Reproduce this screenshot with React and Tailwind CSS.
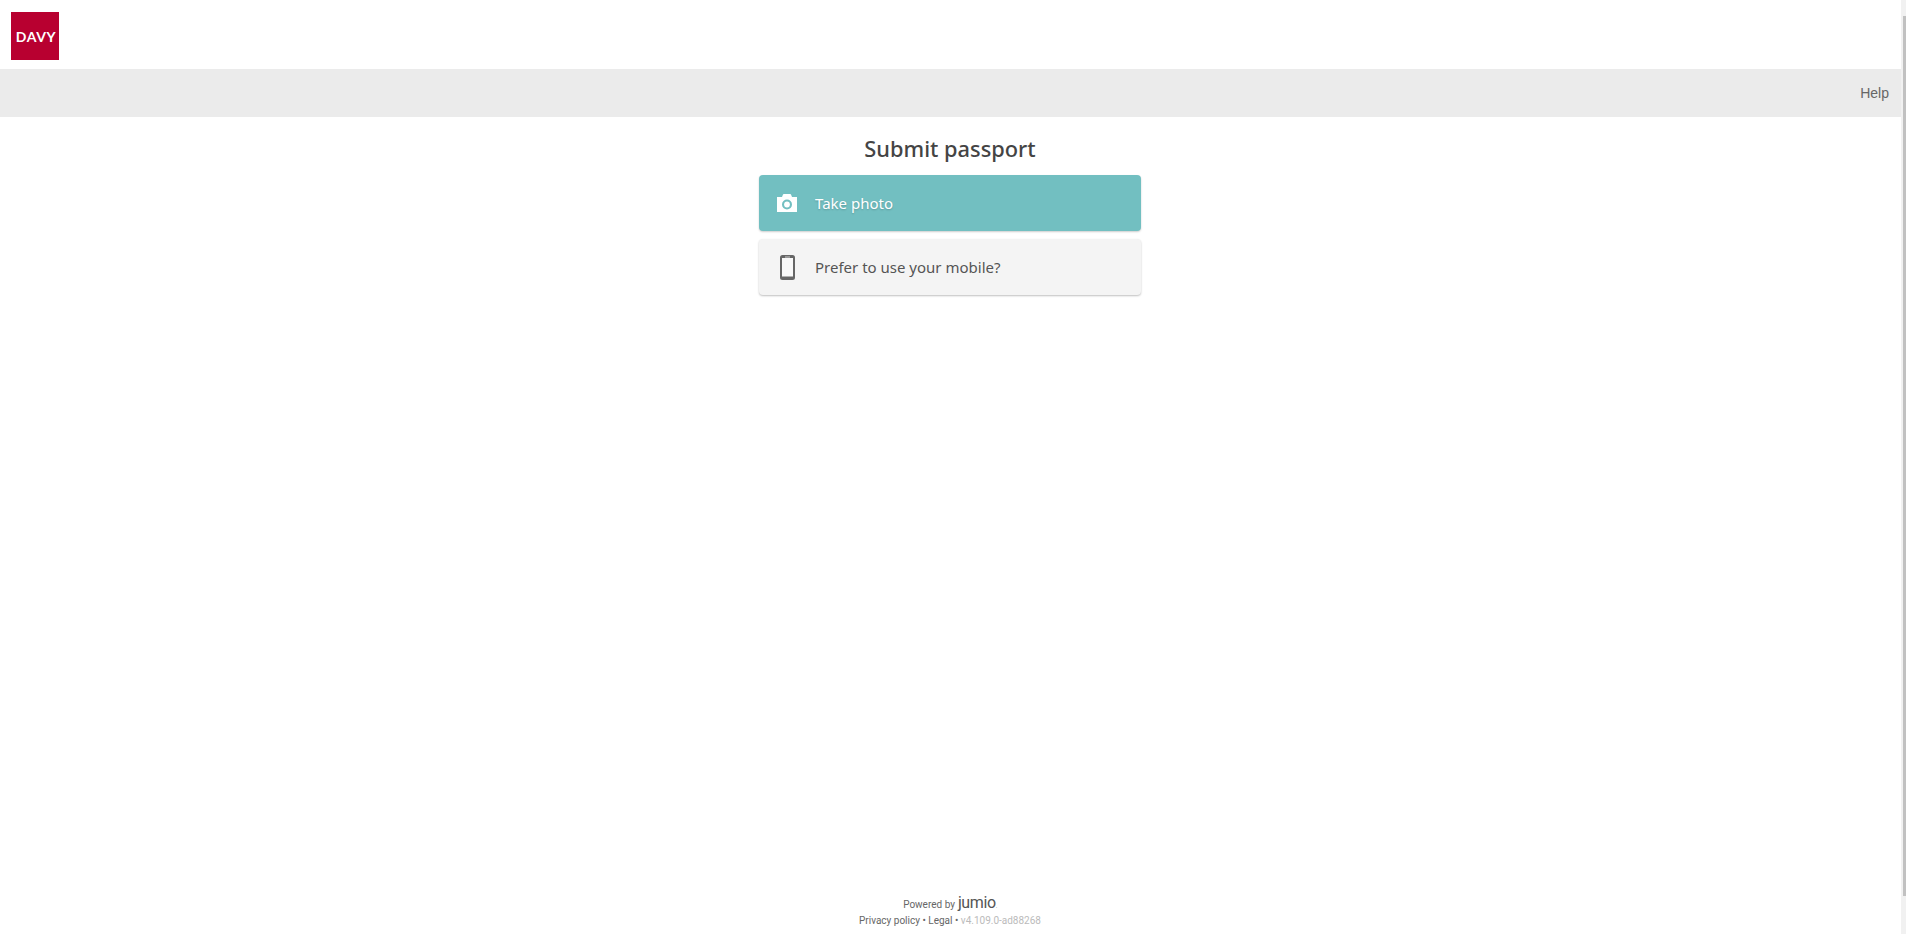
const font = { fontFamily: '"Noto Sans", sans-serif' };
const roboto = { fontFamily: 'Roboto, sans-serif' };
const arial = { fontFamily: '"Liberation Sans", sans-serif' };
const lato = { fontFamily: 'Lato, sans-serif' };

function Camera() {
  return (
    <svg width="20" height="18" viewBox="0 0 20 18" className="shrink-0">
      <path fillRule="evenodd" fill="#fff" d="M0 3h5L6 .5Q6.200 0 6.800 0h6.400q.6 0 .8.500L15 3h5v15H0zM10 15.500a5 5 0 1 0 0-10 5 5 0 0 0 0 10z" />
      <circle cx="10" cy="10.500" r="2.900" fill="#fff" />
    </svg>
  );
}

function Phone() {
  return (
    <svg width="15" height="25" viewBox="0 0 15 25" className="shrink-0">
      <rect x="1" y="1" width="13" height="23" rx="1.500" fill="#f8f8f8" stroke="#666" strokeWidth="2" />
      <rect x="1" y="1" width="13" height="2" fill="#666" />
      <rect x="5" y="1.500" width="5" height="1" fill="#ccc" />
      <rect x="1" y="21.500" width="13" height="2.500" fill="#666" />
    </svg>
  );
}

export default function App() {
  return (
    <div className="h-[934px] overflow-hidden flex bg-white text-[#444]" style={font}>
      <div className="flex-1 min-w-0 flex flex-col">
        <div className="h-[69px] pl-[11px] pt-3 shrink-0">
          <div className="w-12 h-12 bg-[#b80030] flex items-center justify-center pl-[2px] pt-px text-white text-[14px] font-bold tracking-[0.6px]" style={lato}>DAVY</div>
        </div>
        <div className="h-12 shrink-0 bg-[#ebebeb] flex items-center justify-end pr-3 text-sm text-[#666]" style={arial}>Help</div>
        <div className="flex-1 flex flex-col items-center pr-px">
          <h1 className="mt-4 text-[21.8px] leading-8 font-medium text-[#444]">Submit passport</h1>
          <div className="mt-[10px] w-[382px] flex flex-col gap-2">
            <div className="h-14 rounded bg-[#72bfc1] shadow-[0_1px_2px_rgba(0,0,0,0.2)] flex items-center pl-[18px] text-white text-[15px] [text-shadow:0_1px_2px_rgba(0,0,0,0.2)]">
              <Camera />
              <span className="ml-[18px]">Take photo</span>
            </div>
            <div className="h-14 rounded bg-[#f4f4f4] shadow-[0_1px_2px_rgba(0,0,0,0.25)] flex items-center pl-[21px] text-[#555] text-[15px]">
              <Phone />
              <span className="ml-5">Prefer to use your mobile?</span>
            </div>
          </div>
        </div>
        <div className="pb-[5px] flex flex-col items-center text-[#666] pr-px" style={roboto}>
          <div className="flex items-center gap-[3px] text-[10px] leading-4">
            <span>Powered by</span>
            <span className="text-[16px] text-[#555] tracking-tight">jumio<span className="text-[6px]">.</span></span>
          </div>
          <div className="text-[10px] leading-[14px] mb-px">
            Privacy policy • Legal • <span className="text-[#bbb]">v4.109.0-ad88268</span>
          </div>
        </div>
      </div>
      <div className="w-[5px] shrink-0 bg-[#f1f1f1] flex flex-col pl-[2px] pt-4 pb-[38px]">
        <div className="flex-1 bg-[#c1c1c1]" />
      </div>
    </div>
  );
}
